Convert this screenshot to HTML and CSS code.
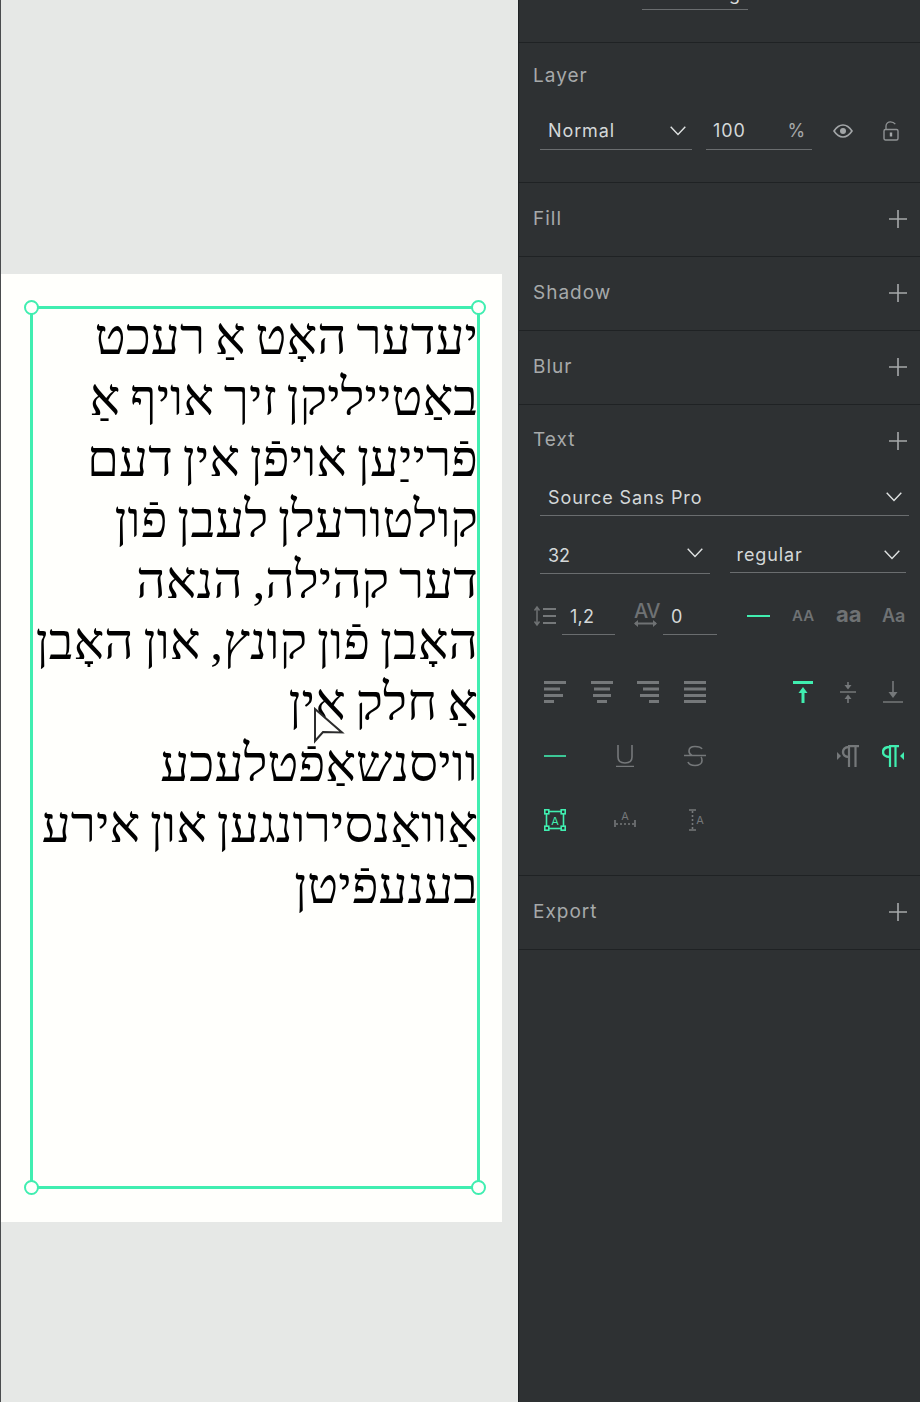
FILE: index.html
```html
<!DOCTYPE html>
<html lang="en">
<head>
  <meta charset="UTF-8" />
  <title>Text properties</title>
  <link rel="stylesheet" href="styles.css">
</head>
<body>
  <svg class="sprite" width="0" height="0">
    <symbol id="chevron" viewBox="0 0 16 10"><path d="M0.7 0.7 8 8.5 15.3 0.7" fill="none" stroke="currentColor" stroke-width="1.4"/></symbol>
    <symbol id="plus" viewBox="0 0 18 18"><path d="M9 0v18M0 9h18" stroke="currentColor" stroke-width="1.6"/></symbol>
  </svg>

  <div class="canvas">
    <div class="artboard">
      <div class="text-box">
        <p class="yiddish" dir="rtl">יעדער האָט אַ רעכט<br>באַטייליקן זיך אויף אַ<br>פֿרייַען אויפֿן אין דעם<br>קולטורעלן לעבן פֿון<br>דער קהילה, הנאה<br>האָבן פֿון קונץ, און האָבן<br>אַ חלק אין<br>וויסנשאַפֿטלעכע<br>אַוואַנסירונגען און אירע<br>בענעפֿיטן</p>
        <span class="handle tl"></span>
        <span class="handle tr"></span>
        <span class="handle bl"></span>
        <span class="handle br"></span>
      </div>
      <svg class="cursor" width="32" height="38" viewBox="0 0 32 38"><path d="M2 2 29 25.500 10 25 2 34Z" fill="#fffffc" stroke="#2c2c2c" stroke-width="2"/></svg>
    </div>
  </div>

  <aside class="panel">
    <section class="section top">
      <div class="top-field"><span>g</span></div>
    </section>

    <section class="section layer">
      <div class="head"><h3>Layer</h3></div>
      <div class="layer-row">
        <div class="field blend"><span>Normal</span><svg class="chev"><use href="#chevron"/></svg></div>
        <div class="field opacity"><span>100</span><em>%</em></div>
        <svg class="eye" width="20" height="14" viewBox="0 0 20 14"><path d="M1 7C4 2.500 7 1 10 1s6 1.500 9 6c-3 4.500-6 6-9 6S4 11.500 1 7Z" fill="none" stroke="#a3a6a8" stroke-width="1.600"/><circle cx="10" cy="7" r="3" fill="#a3a6a8"/></svg>
        <svg class="lock" width="16" height="20" viewBox="0 0 16 20"><path d="M3 8V5a4.500 4.500 0 0 1 4.500-4.200c2.500 0 3.800 1 4.800 2.400" fill="none" stroke="#8f9294" stroke-width="1.300"/><rect x="1" y="8.500" width="14" height="10.500" rx="1.500" fill="none" stroke="#8f9294" stroke-width="1.400"/><path d="M8 11.500v4" stroke="#a3a6a8" stroke-width="2.400"/></svg>
      </div>
    </section>

    <section class="section"><div class="head"><h3>Fill</h3><svg class="add"><use href="#plus"/></svg></div></section>
    <section class="section"><div class="head"><h3>Shadow</h3><svg class="add"><use href="#plus"/></svg></div></section>
    <section class="section"><div class="head"><h3>Blur</h3><svg class="add"><use href="#plus"/></svg></div></section>

    <section class="section text-section">
      <div class="head"><h3>Text</h3><svg class="add"><use href="#plus"/></svg></div>

      <div class="field font"><span>Source Sans Pro</span><svg class="chev"><use href="#chevron"/></svg></div>

      <div class="size-row">
        <div class="field size"><span>32</span><svg class="chev"><use href="#chevron"/></svg></div>
        <div class="field weight"><span>regular</span><svg class="chev"><use href="#chevron"/></svg></div>
      </div>

      <div class="metric-row">
        <svg class="metric-icon" width="23" height="22" viewBox="0 0 23 22">
          <path d="M4 3v16M1.500 5.500 4 2l2.500 3.500M1.500 16.500 4 20l2.500-3.500" fill="none" stroke="#6f7274" stroke-width="1.500"/>
          <path d="M10 4h13M10 11h13M10 18h13" stroke="#75787a" stroke-width="2.200"/>
        </svg>
        <div class="field line-height"><span>1,2</span></div>
        <div class="tracking">
          <b>AV</b>
          <svg width="23" height="7" viewBox="0 0 23 7"><path d="M1 3.500h21" stroke="#6f7274" stroke-width="2"/><path d="M0 3.500 4 0v7ZM23 3.500 19 0v7Z" fill="#6f7274"/></svg>
        </div>
        <div class="field spacing"><span>0</span></div>
        <div class="case-group">
          <i class="dash"></i>
          <b class="case small">AA</b>
          <b class="case big">aa</b>
          <b class="case mid">Aa</b>
        </div>
      </div>

      <div class="icon-row align-row">
        <div class="icons-left">
          <svg class="ico" viewBox="0 0 22 22"><path d="M0 1.500h22M0 8h16M0 14.500h19M0 20.500h10"/></svg>
          <svg class="ico" viewBox="0 0 22 22"><path d="M0 1.500h22M3 8h16M2 14.500h18M6 20.500h10"/></svg>
          <svg class="ico" viewBox="0 0 22 22"><path d="M0 1.500h22M6 8h16M3 14.500h19M12 20.500h10"/></svg>
          <svg class="ico" viewBox="0 0 22 22"><path d="M0 1.500h22M0 8h22M0 14.500h22M0 20.500h22"/></svg>
        </div>
        <div class="icons-right">
          <svg class="ico on" viewBox="0 0 22 22"><path d="M1 1.500h20"/><path class="shaft" d="M11 9v13"/><path class="solid" d="M11 6 15.500 12h-9Z"/></svg>
          <svg class="ico" viewBox="0 0 22 22"><path class="thin" d="M3 11h16M11 1v6M11 15v7"/><path class="solid" d="M11 8.500 7.500 4h7ZM11 13.500 7.500 18h7Z"/></svg>
          <svg class="ico" viewBox="0 0 22 22"><path class="thin" d="M1 21h20M11 0v14"/><path class="solid" d="M11 17 6.500 11h9Z"/></svg>
        </div>
      </div>

      <div class="icon-row deco-row">
        <div class="icons-left">
          <svg class="ico on" viewBox="0 0 22 22"><path class="thin" d="M0 11h22"/></svg>
          <svg class="ico" viewBox="0 0 22 22"><path class="thin" d="M4 0v12c0 4 3 6 7 6s7-2 7-6V0M2 21.500h18"/></svg>
          <svg class="ico" viewBox="0 0 22 22"><path class="thin" d="M0 10.500h22M18 4C17 2 14 1.500 11 1.500 7 1.500 5 3.500 5 6c0 2 1 3.500 3 4.500M17 12c1 1 1 2 1 3.500 0 3-3 5-7 5-3 0-6-1-7-3.500"/></svg>
        </div>
        <div class="icons-right">
          <svg class="ico" viewBox="0 0 22 22"><path class="solid" d="M0 7 4 11 0 15Z"/><path class="stem" d="M12 1v21M18.500 1v21M11 1.200h11"/><path class="hollow" d="M12 2C7.500 2 6 4.500 6 7s1.500 5 6 5"/></svg>
          <svg class="ico on" viewBox="0 0 22 22"><path class="solid" d="M22 7 18 11 22 15Z"/><path class="stem" d="M8 1v21M13.500 1v21M7 1.200h10"/><path class="hollow" d="M8 2C3 2 1 4.500 1 7s2 5 7 5"/></svg>
        </div>
      </div>

      <div class="icon-row box-row">
        <div class="icons-left">
          <svg class="ico on" viewBox="0 0 22 22">
            <rect class="frame" x="2.500" y="2.500" width="17" height="17"/>
            <rect class="corner" x="0.800" y="0.800" width="4" height="4"/><rect class="corner" x="17.200" y="0.800" width="4" height="4"/>
            <rect class="corner" x="0.800" y="17.200" width="4" height="4"/><rect class="corner" x="17.200" y="17.200" width="4" height="4"/>
            <text x="11" y="15.500" text-anchor="middle">A</text>
          </svg>
          <svg class="ico" viewBox="0 0 22 22">
            <text x="11" y="11" text-anchor="middle">A</text>
            <path class="thin" d="M1 11v7M21 11v7"/>
            <path class="dots" d="M2 15h18"/>
          </svg>
          <svg class="ico" viewBox="0 0 22 22">
            <path class="thin" d="M5 1h7M5 21h7"/>
            <path class="dots" d="M8.500 2v18"/>
            <text x="16" y="15" text-anchor="middle">A</text>
          </svg>
        </div>
      </div>
    </section>

    <section class="section"><div class="head"><h3>Export</h3><svg class="add"><use href="#plus"/></svg></div></section>
  </aside>
</body>
</html>
```

FILE: styles.css
```css
* {
  box-sizing: border-box;
}

body {
  margin: 0;
  width: 920px;
  height: 1402px;
  overflow: hidden;
  display: flex;
  font-family: Inter, "Noto Sans", sans-serif;
  background: #2e3133;
}

.sprite {
  display: block;
  position: absolute;
}

.canvas {
  width: 518px;
  padding: 274px 0 0 0;
  background: #e6e8e6;
  border-left: 1px solid #4a4c4e;
}

.artboard {
  position: relative;
  width: 501px;
  height: 948px;
  background: #fffffc;
}

.text-box {
  position: absolute;
  left: 29px;
  top: 32px;
  width: 450px;
  height: 883px;
  border: 3px solid #40eeb0;
}

.yiddish {
  margin: -3px -1px 0 0;
  font-family: "Liberation Serif", serif;
  font-size: 51.3px;
  word-spacing: -3px;
  line-height: 61px;
  color: #000;
  white-space: nowrap;
}

.handle {
  position: absolute;
  width: 15px;
  height: 15px;
  border-radius: 50%;
  background: #fffffc;
  border: 2px solid #40eeb0;
}

.tl { left: -9px; top: -9px; }
.tr { right: -9px; top: -9px; }
.bl { left: -9px; bottom: -9px; }
.br { right: -9px; bottom: -9px; }

.cursor {
  position: absolute;
  left: 312px;
  top: 433px;
}

.panel {
  width: 402px;
  border-left: 1px solid #1f2224;
  background: #2e3133;
  color: #a6a9aa;
}

.section {
  border-bottom: 1px solid #1f2224;
  padding: 0 14px;
}

.section h3 {
  margin: 0;
  font-size: 19px;
  font-weight: 400;
  letter-spacing: 1px;
  color: #a6a9aa;
}

.head {
  height: 73px;
  padding-bottom: 3px;
  display: flex;
  align-items: center;
  justify-content: space-between;
}

.add {
  width: 18px;
  height: 18px;
  margin: 2px -1px 0 0;
  color: #a6a9aa;
}

.top {
  height: 43px;
}

.top-field {
  width: 106px;
  height: 10px;
  margin-left: 109px;
  border-bottom: 1px solid #6a6d6f;
  display: flex;
  justify-content: flex-end;
  align-items: flex-end;
  padding-right: 8px;
  font-size: 18px;
  line-height: 18px;
  color: #d8dcdc;
}

.top-field span {
  margin-bottom: 6px;
}

.field {
  display: flex;
  align-items: center;
  justify-content: space-between;
  border-bottom: 1px solid #6a6d6f;
  font-size: 18px;
  letter-spacing: 0.9px;
  color: #d4d8d9;
  padding-left: 8px;
}

.chev {
  width: 16px;
  height: 10px;
  color: #dfe2e2;
}

.layer {
  height: 140px;
}

.layer .head {
  height: 67px;
}

.layer-row {
  display: flex;
  align-items: flex-end;
  padding-left: 7px;
  margin-top: -2px;
}

.blend {
  width: 152px;
  height: 42px;
  padding-top: 4px;
  padding-right: 6px;
}

.opacity {
  width: 106px;
  height: 42px;
  margin-left: 14px;
  padding: 4px 6px 0 7px;
}

.opacity em {
  font-style: normal;
  color: #a6a9aa;
}

.eye {
  margin: 0 0 12px 21px;
}

.lock {
  margin: 0 0 9px 30px;
}

.text-section {
  height: 471px;
}

.text-section .head {
  height: 72px;
}

.font {
  margin-left: 7px;
  width: 369px;
  height: 39px;
  padding-top: 2px;
  padding-right: 7px;
}

.size-row {
  display: flex;
  margin: 19px 0 0 7px;
  gap: 20px;
}

.size {
  width: 171px;
  height: 39px;
  padding-top: 2px;
  padding-right: 7px;
  letter-spacing: 0;
}

.size .chev {
  margin-bottom: 4px;
}

.weight {
  width: 178px;
  height: 38px;
  padding: 2px 6px 0 7px;
}

.metric-row {
  display: flex;
  align-items: flex-end;
  margin-top: 19px;
}

.metric-icon {
  margin-bottom: 8px;
}

.line-height {
  width: 53px;
  height: 41px;
  margin-left: 6px;
  padding-top: 4px;
  letter-spacing: 0.3px;
}

.tracking {
  width: 23px;
  margin: 0 0 8px 19px;
  display: flex;
  flex-direction: column;
  gap: 1px;
  color: #6f7274;
}

.tracking b {
  font-size: 20px;
  line-height: 16px;
  font-weight: 500;
  letter-spacing: -0.6px;
}

.tracking svg {
  display: block;
}

.spacing {
  width: 54px;
  height: 41px;
  margin-left: 6px;
  padding-top: 4px;
}

.case-group {
  display: flex;
  align-items: center;
  height: 42px;
  padding-top: 3px;
  margin-left: 30px;
}

.dash {
  display: block;
  width: 23px;
  height: 2px;
  background: #40eeb0;
}

.case {
  color: #6f7274;
  font-weight: 700;
  line-height: 22px;
}

.small {
  width: 22px;
  margin: 1px 0 0 22px;
  font-size: 15px;
  font-weight: 600;
}

.big {
  width: 24px;
  margin: -4px 0 0 22px;
  font-size: 22px;
}

.mid {
  margin: 1px 0 0 22px;
  font-size: 18px;
  font-weight: 600;
}

.icon-row {
  display: flex;
  justify-content: space-between;
  padding: 0 2px 0 11px;
}

.icons-left {
  width: 162px;
  display: flex;
  justify-content: space-between;
}

.icons-right {
  display: flex;
  gap: 23px;
}

.align-row {
  margin-top: 46px;
}

.deco-row {
  margin-top: 42px;
}

.box-row {
  margin-top: 42px;
}

.ico {
  display: block;
  width: 22px;
  height: 22px;
  fill: none;
  stroke: #75787a;
  stroke-width: 3;
}

.ico .thin {
  stroke-width: 1.6;
}

.ico .stem {
  stroke-width: 2.2;
}

.ico .shaft {
  stroke-width: 3;
}

.ico .solid {
  fill: #75787a;
  stroke: none;
}

.ico .hollow {
  stroke-width: 2.4;
}

.ico .dots {
  stroke-width: 1.6;
  stroke-dasharray: 2 2;
}

.ico text {
  font-family: Inter, sans-serif;
  font-size: 11px;
  fill: #75787a;
  stroke: none;
}

.ico .frame {
  stroke-width: 1.6;
}

.ico .corner {
  stroke-width: 1.6;
  fill: #2e3133;
}

.ico.on {
  stroke: #40eeb0;
}

.ico.on .solid,
.ico.on text {
  fill: #40eeb0;
}
```
